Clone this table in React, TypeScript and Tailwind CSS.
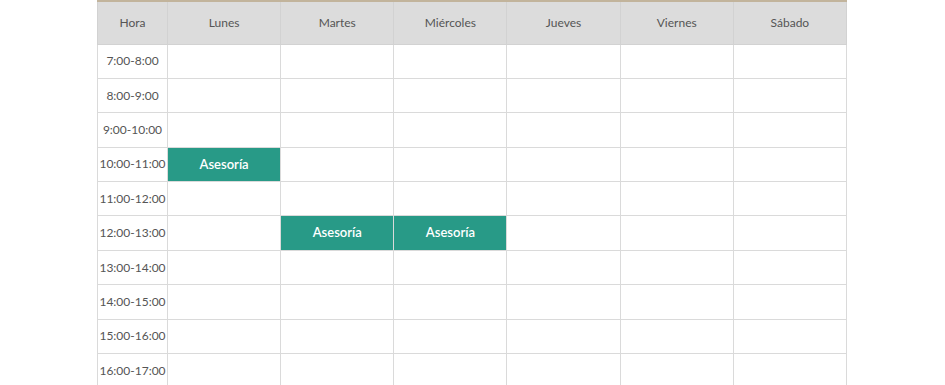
const days = ['Lunes', 'Martes', 'Miércoles', 'Jueves', 'Viernes', 'Sábado'];

const hours = [
  '7:00-8:00',
  '8:00-9:00',
  '9:00-10:00',
  '10:00-11:00',
  '11:00-12:00',
  '12:00-13:00',
  '13:00-14:00',
  '14:00-15:00',
  '15:00-16:00',
  '16:00-17:00',
];

// hora -> dias con asesoría
const booked: Record<string, string[]> = {
  '10:00-11:00': ['Lunes'],
  '12:00-13:00': ['Martes', 'Miércoles'],
};

export default function App() {
  return (
    <div className="min-h-screen bg-white" style={{ fontFamily: 'Lato, "Open Sans", sans-serif' }}>
      <div className="ml-[97px] w-[750px] border-t-2 border-[#c2b49c]">
        <table className="w-full table-fixed border-collapse text-[12px] text-[#555]">
          <thead>
            <tr className="h-[42px] bg-[#dcdcdc]">
              <th className="w-[70px] border border-t-0 border-[#d2d2d2] font-normal">Hora</th>
              {days.map((d) => (
                <th key={d} className="border border-t-0 border-[#d2d2d2] font-normal">
                  {d}
                </th>
              ))}
            </tr>
          </thead>
          <tbody>
            {hours.map((h) => (
              <tr key={h} className="h-[34.4px]">
                <td className="border border-[#dadada] text-center">{h}</td>
                {days.map((d) =>
                  booked[h]?.includes(d) ? (
                    <td
                      key={d}
                      className="border border-[#dadada] bg-[#289a87] text-center text-[13px] font-semibold text-white"
                    >
                      Asesoría
                    </td>
                  ) : (
                    <td key={d} className="border border-[#dadada]" />
                  )
                )}
              </tr>
            ))}
          </tbody>
        </table>
      </div>
    </div>
  );
}
